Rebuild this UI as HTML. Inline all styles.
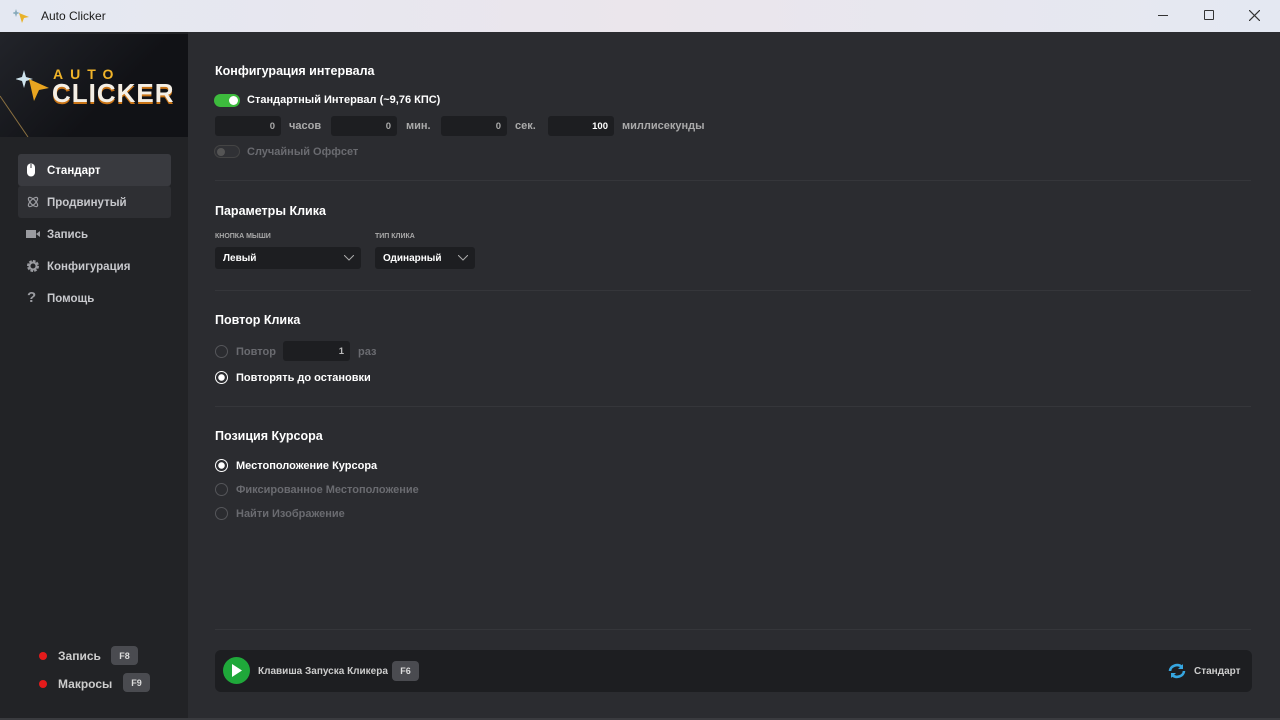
<!DOCTYPE html>
<html><head><meta charset="utf-8"><style>
*{margin:0;padding:0;box-sizing:border-box}
body{width:1280px;height:720px;overflow:hidden;background:#2b2c30;font-family:"Liberation Sans",sans-serif;font-weight:bold;color:#e8e8ea;position:relative}
.tb{position:absolute;left:0;top:0;width:1280px;height:32px;background:linear-gradient(90deg,#e4e8f2,#ebe6ec 50%,#e4e8f2);color:#1b1b1b;font-weight:normal;font-size:12px}
.side{position:absolute;left:0;top:32px;width:188px;height:686px;background:#222326}
.logo{position:absolute;left:0;top:34px;width:188px;height:103px;background:linear-gradient(135deg,#22242a,#111216 60%);overflow:hidden}
.nav{position:absolute;left:18px;width:153px;height:32px;font-size:11.5px;color:#c7c8cc;display:flex;align-items:center;padding-left:29px;padding-top:1px;border-radius:3px}
.ico{position:absolute;left:8px;top:9px}
.abs{position:absolute}
h3{position:absolute;left:215px;font-size:12.5px;color:#fff}
.t{position:absolute;font-size:11px}
.inp{position:absolute;height:20px;background:#1d1e21;border-radius:3px;font-size:9.5px;color:#aaa;text-align:right;padding:5px 6px 0 0}
.hr{position:absolute;left:215px;width:1036px;height:1px;background:#35363a}
.rad{position:absolute;width:13px;height:13px;border-radius:50%;border:1.5px solid #55565a}
.rad.on{border-color:#fff;background:radial-gradient(#fff 3px,#2b2c30 3.5px)}
.sel{position:absolute;height:22px;background:#1d1e21;border-radius:3px;font-size:10px;color:#fff;padding:6px 0 0 8px}
.key{position:absolute;background:#4a4b50;border-radius:4px;font-size:9px;color:#ddd;text-align:center;padding-top:5px}
</style></head><body>
<div class="tb">
<svg class="abs" style="left:13px;top:8px" width="18" height="16" viewBox="0 0 18 16"><path d="M3 1l1 3 3 1-3 1-1 3-1-3-3-1 3-1z" fill="#8ab"/><path d="M6 5l10 4-5 1-2 5z" fill="#e8b22a"/></svg>
<div class="abs" style="left:41px;top:9px">Auto Clicker</div>
<div class="abs" style="left:1158px;top:15px;width:10px;height:1px;background:#333"></div>
<div class="abs" style="left:1204px;top:10px;width:10px;height:10px;border:1px solid #333;border-radius:1px"></div>
<svg class="abs" style="left:1249px;top:10px" width="11" height="11"><path d="M0 0L11 11M11 0L0 11" stroke="#333" stroke-width="1.2"/></svg>
</div>
<div class="side"></div>
<div class="logo">
<svg class="abs" style="left:0;top:0" width="188" height="103"><path d="M0 62L28 103" stroke="#8a7040" stroke-width="1"/></svg>
<svg class="abs" style="left:16px;top:36px" width="36" height="32" viewBox="0 0 36 32"><path d="M8 0l2 7 7 2-7 2-2 7-2-7-7-2 7-2z" fill="#cfe4ee"/><path d="M13 9l20 9-10 2-5 11z" fill="#e9a520"/></svg>
<div class="abs" style="left:53px;top:32px;font-size:14px;letter-spacing:7px;color:#f1b429;font-weight:900">AUTO</div>
<div class="abs" style="left:52px;top:44px;font-size:26px;color:#f4efe6;font-weight:900;letter-spacing:1px;text-shadow:0 2px 0 #c97416">CLICKER</div>
</div>
<div class="nav" style="top:154px;background:#393a3f;color:#fff"><svg class="ico" width="10" height="14"><rect x="1" y="0.5" width="8" height="13" rx="4" fill="#fff"/><path d="M5 1v4" stroke="#393a3f"/></svg>Стандарт</div>
<div class="nav" style="top:186px;background:#2e2f33"><svg class="ico" width="14" height="14" viewBox="0 0 14 14" fill="none" stroke="#9a9ba0" stroke-width="1.2"><ellipse cx="7" cy="7" rx="6" ry="2.5" transform="rotate(45 7 7)"/><ellipse cx="7" cy="7" rx="6" ry="2.5" transform="rotate(-45 7 7)"/></svg>Продвинутый</div>
<div class="nav" style="top:218px"><svg class="ico" width="14" height="14"><rect x="0" y="3" width="10" height="8" fill="#9a9ba0"/><path d="M10 7l4-3v6z" fill="#9a9ba0"/></svg>Запись</div>
<div class="nav" style="top:250px"><svg class="ico" width="14" height="14" viewBox="0 0 14 14"><circle cx="7" cy="7" r="4.5" fill="none" stroke="#9a9ba0" stroke-width="3" stroke-dasharray="2.4 1.1"/><circle cx="7" cy="7" r="3.5" fill="none" stroke="#9a9ba0" stroke-width="2"/></svg>Конфигурация</div>
<div class="nav" style="top:282px"><span class="ico" style="top:7px;left:9px;font-size:15px;color:#9a9ba0">?</span>Помощь</div>
<div class="abs" style="left:39px;top:652px;width:8px;height:8px;border-radius:50%;background:#e41b1b"></div>
<div class="t" style="left:58px;top:649px;font-size:12px;color:#ccc">Запись</div>
<div class="key" style="left:111px;top:646px;width:27px;height:19px">F8</div>
<div class="abs" style="left:39px;top:680px;width:8px;height:8px;border-radius:50%;background:#e41b1b"></div>
<div class="t" style="left:58px;top:677px;font-size:12px;color:#ccc">Макросы</div>
<div class="key" style="left:123px;top:673px;width:27px;height:19px">F9</div>

<h3 style="top:64px">Конфигурация интервала</h3>
<div class="abs" style="left:214px;top:94px;width:26px;height:13px;border-radius:7px;background:#3dbb3d"><div class="abs" style="left:15px;top:2px;width:9px;height:9px;border-radius:50%;background:#fff"></div></div>
<div class="t" style="left:247px;top:94px;color:#fff">Стандартный Интервал (~9,76 КПС)</div>
<div class="inp" style="left:215px;top:116px;width:66px">0</div><div class="t" style="left:289px;top:120px;color:#aaa">часов</div>
<div class="inp" style="left:331px;top:116px;width:66px">0</div><div class="t" style="left:406px;top:120px;color:#aaa">мин.</div>
<div class="inp" style="left:441px;top:116px;width:66px">0</div><div class="t" style="left:515px;top:120px;color:#aaa">сек.</div>
<div class="inp" style="left:548px;top:116px;width:66px;color:#fff">100</div><div class="t" style="left:622px;top:120px;color:#aaa">миллисекунды</div>
<div class="abs" style="left:214px;top:145px;width:26px;height:13px;border-radius:7px;border:1px solid #444;background:#303135"><div class="abs" style="left:2px;top:2px;width:8px;height:8px;border-radius:50%;background:#555"></div></div>
<div class="t" style="left:247px;top:146px;color:#6a6b70">Случайный Оффсет</div>
<div class="hr" style="top:180px"></div>

<h3 style="top:204px">Параметры Клика</h3>
<div class="t" style="left:215px;top:233px;font-size:7px;color:#aaa">КНОПКА МЫШИ</div>
<div class="t" style="left:375px;top:233px;font-size:7px;color:#aaa">ТИП КЛИКА</div>
<div class="sel" style="left:215px;top:247px;width:146px">Левый<svg class="abs" style="left:129px;top:8px" width="10" height="6"><path d="M0 0l5 5 5-5" stroke="#aaa" fill="none"/></svg></div>
<div class="sel" style="left:375px;top:247px;width:100px">Одинарный<svg class="abs" style="left:83px;top:8px" width="10" height="6"><path d="M0 0l5 5 5-5" stroke="#aaa" fill="none"/></svg></div>
<div class="hr" style="top:290px"></div>

<h3 style="top:313px">Повтор Клика</h3>
<div class="rad" style="left:215px;top:345px"></div><div class="t" style="left:236px;top:346px;color:#6a6b70">Повтор</div>
<div class="inp" style="left:283px;top:341px;width:67px;color:#bbb">1</div><div class="t" style="left:358px;top:346px;color:#6a6b70">раз</div>
<div class="rad on" style="left:215px;top:371px"></div><div class="t" style="left:236px;top:372px;color:#fff">Повторять до остановки</div>
<div class="hr" style="top:406px"></div>

<h3 style="top:429px">Позиция Курсора</h3>
<div class="rad on" style="left:215px;top:459px"></div><div class="t" style="left:236px;top:460px;color:#fff">Местоположение Курсора</div>
<div class="rad" style="left:215px;top:483px"></div><div class="t" style="left:236px;top:484px;color:#6a6b70">Фиксированное Местоположение</div>
<div class="rad" style="left:215px;top:507px"></div><div class="t" style="left:236px;top:508px;color:#6a6b70">Найти Изображение</div>
<div class="hr" style="top:629px"></div>

<div class="abs" style="left:215px;top:650px;width:1037px;height:42px;background:#1d1e21;border-radius:6px"></div>
<div class="abs" style="left:223px;top:657px;width:27px;height:27px;border-radius:50%;background:#1fa83a"><svg class="abs" style="left:9px;top:7px" width="11" height="13"><path d="M0 0l10 6.5L0 13z" fill="#fff"/></svg></div>
<div class="t" style="left:258px;top:666px;font-size:10px;color:#ccc">Клавиша Запуска Кликера</div>
<div class="key" style="left:392px;top:661px;width:27px;height:20px">F6</div>
<svg class="abs" style="left:1167px;top:663px" width="20" height="16" viewBox="0 0 20 16" fill="none" stroke="#36a6e0" stroke-width="2.6"><path d="M3 8a7 6 0 0 1 12-4"/><path d="M17 8a7 6 0 0 1-12 4"/><path d="M16 1v5h-5z" fill="#36a6e0" stroke-width="0"/><path d="M4 15v-5h5z" fill="#36a6e0" stroke-width="0"/></svg>
<div class="t" style="left:1194px;top:666px;font-size:10px;color:#ccc">Стандарт</div>
<div class="abs" style="left:0;top:718px;width:1280px;height:2px;background:#3a3b3f"></div>
</body></html>
